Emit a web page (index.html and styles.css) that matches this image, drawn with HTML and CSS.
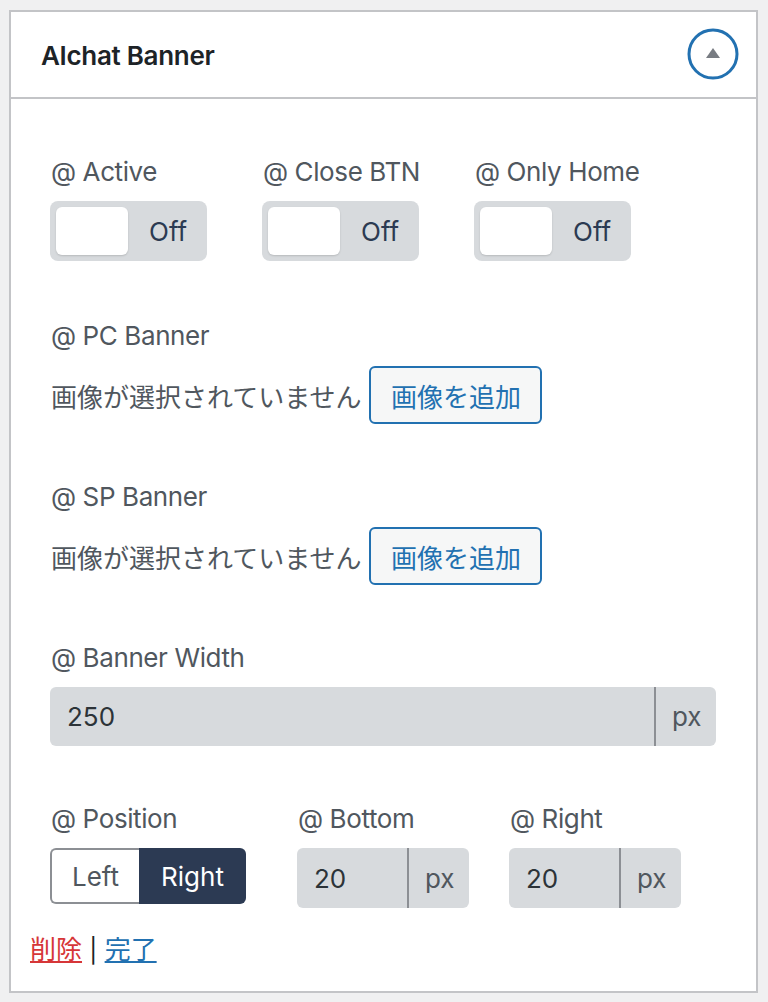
FILE: index.html
```html
<!DOCTYPE html>
<html lang="ja">
<head>
<meta charset="utf-8">
<link rel="stylesheet" href="styles.css">
</head>
<body>
<div class="card">
  <div class="card-head">
    <h2 class="title">AIchat Banner</h2>
    <button class="toggle-btn" aria-label="toggle">
      <svg width="54" height="54" viewBox="0 0 54 54"><circle cx="27" cy="27" r="24" fill="none" stroke="#2271b1" stroke-width="3"/><polygon points="27,21 34,31 20,31" fill="#787c82"/></svg>
    </button>
  </div>
  <div class="card-body">
    <div class="row3">
      <div class="field">
        <div class="label">@ Active</div>
        <div class="switch"><span class="knob"></span><span class="off">Off</span></div>
      </div>
      <div class="field">
        <div class="label">@ Close BTN</div>
        <div class="switch"><span class="knob"></span><span class="off">Off</span></div>
      </div>
      <div class="field">
        <div class="label">@ Only Home</div>
        <div class="switch"><span class="knob"></span><span class="off">Off</span></div>
      </div>
    </div>
    <div class="field media-field">
      <div class="label">@ PC Banner</div>
      <div class="media"><span class="none">画像が選択されていません</span><button class="add">画像を追加</button></div>
    </div>
    <div class="field media-field">
      <div class="label">@ SP Banner</div>
      <div class="media"><span class="none">画像が選択されていません</span><button class="add">画像を追加</button></div>
    </div>
    <div class="field">
      <div class="label">@ Banner Width</div>
      <div class="input wide"><span class="val">250</span><span class="unit">px</span></div>
    </div>
    <div class="row-pos">
      <div class="field">
        <div class="label">@ Position</div>
        <div class="seg"><span class="seg-l">Left</span><span class="seg-r">Right</span></div>
      </div>
      <div class="field">
        <div class="label">@ Bottom</div>
        <div class="input small"><span class="val">20</span><span class="unit">px</span></div>
      </div>
      <div class="field">
        <div class="label">@ Right</div>
        <div class="input small"><span class="val">20</span><span class="unit">px</span></div>
      </div>
    </div>
  </div>
  <div class="links"><a class="del" href="#">削除</a> <span class="sep">|</span> <a class="done" href="#">完了</a></div>
</div>
</body>
</html>
```
FILE: styles.css
```css
* { box-sizing: border-box; }
body {
  margin: 0;
  background: #f0f0f1;
  font-family: Inter, "Noto Sans", "Noto Sans CJK JP", sans-serif;
  font-size: 26px;
  color: #50575e;
}
.card {
  margin: 10px 0 0 9px;
  width: 749px;
  height: 983px;
  background: #fff;
  border: 2px solid #c3c4c7;
  display: flex;
  flex-direction: column;
}
.card-head {
  height: 87px;
  border-bottom: 2px solid #c3c4c7;
  display: flex;
  align-items: center;
  justify-content: space-between;
  padding: 0 16px 0 30px;
}
.title {
  margin: 2px 0 0 0;
  font-size: 26px;
  font-weight: 600;
  color: #1d2327;
  letter-spacing: -0.3px;
}
.toggle-btn {
  border: 0;
  background: none;
  padding: 0;
  display: flex;
  margin-top: -2px;
}
.card-body {
  padding: 55px 39px 0 39px;
  display: flex;
  flex-direction: column;
  gap: 55px;
}
.field { display: flex; flex-direction: column; gap: 11px; }
.media-field { gap: 12px; }
.label { line-height: 36px; height: 36px; padding-left: 1px; letter-spacing: -0.4px; }
.row3 { display: flex; margin-bottom: 2px; }
.row3 > .field { width: 212px; }
.switch {
  width: 157px;
  height: 60px;
  background: #d7dadd;
  border-radius: 8px;
  display: flex;
  align-items: center;
  padding: 0 6px;
}
.knob {
  width: 72px;
  height: 48px;
  background: #fff;
  border-radius: 6px;
  box-shadow: 0 1px 2px rgba(0,0,0,0.15);
}
.off {
  margin-left: 21px;
  color: #2c3a52;
}
.media { display: flex; align-items: center; gap: 8px; height: 58px; }
.none { padding-left: 1px; }
.add {
  font: inherit;
  height: 58px;
  width: 173px;
  border: 2px solid #2271b1;
  background: #f6f7f7;
  color: #2271b1;
  border-radius: 6px;
  padding: 0;
}
.input {
  height: 59px;
  background: #d7dadd;
  border-radius: 6px;
  display: flex;
  align-items: center;
}
.input.wide { width: 666px; }
.input .val { flex: 1; padding-left: 17px; color: #2c3338; }
.input .unit {
  height: 100%;
  display: flex;
  align-items: center;
  border-left: 2px solid #8c8f94;
  padding: 0 16px 0 16px;
}
.input.wide .unit { width: 62px; padding-left: 16px; }
.input.small { width: 172px; height: 60px; }
.input.small .unit { width: 62px; padding-left: 16px; }
.row-pos { display: flex; }
.row-pos > .field:nth-child(1) { width: 247px; }
.row-pos > .field:nth-child(2) { width: 212px; }
.seg {
  display: flex;
  height: 56px;
  width: 196px;
}
.seg-l {
  width: 89px;
  border: 2px solid #8c8f94;
  border-right: 0;
  border-radius: 6px 0 0 6px;
  display: flex;
  align-items: center;
  justify-content: center;
  color: #50575e;
}
.seg-r {
  flex: 1;
  background: #2c3a53;
  color: #fff;
  border-radius: 0 6px 6px 0;
  display: flex;
  align-items: center;
  justify-content: center;
}
.links {
  margin-top: 24px;
  padding-left: 19px;
  line-height: 36px;
  font-size: 26px;
}
.del { color: #d63638; }
.done { color: #2271b1; }
.sep { color: #1d2327; font-size: 24px; }
```
